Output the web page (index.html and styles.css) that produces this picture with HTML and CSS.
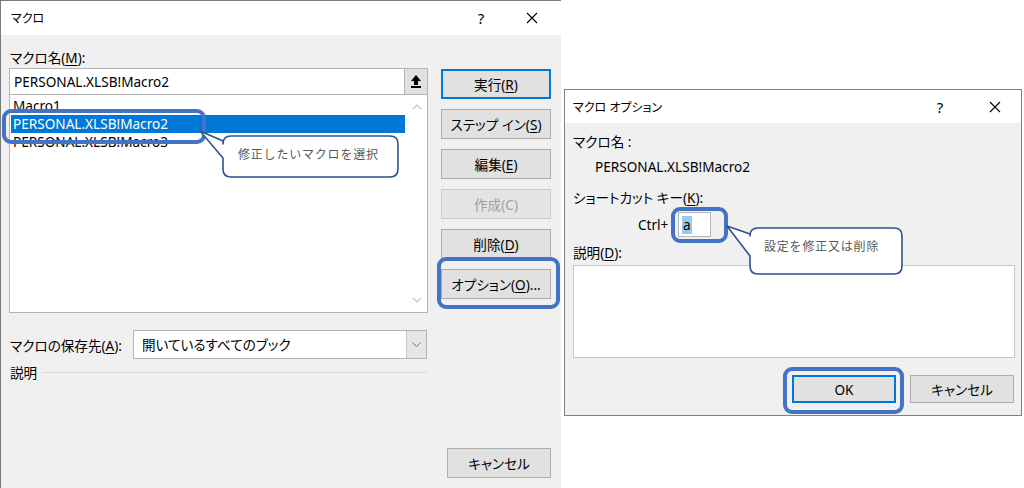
FILE: index.html
```html
<!DOCTYPE html>
<html lang="ja">
<head>
<meta charset="utf-8">
<title>マクロ</title>
<link rel="stylesheet" href="styles.css">
</head>
<body>
<div class="page">
  <section class="dlg dlg-macro">
    <header class="titlebar">
      <span class="title">マクロ</span>
      <span class="tb-btn help">?</span>
      <span class="tb-btn close"><svg width="12" height="12" viewBox="0 0 12 12"><path d="M1 1L11 11M11 1L1 11" stroke="#000" stroke-width="1.1" fill="none"/></svg></span>
    </header>
    <div class="macro-body">
      <div class="macro-main">
        <div class="macro-left">
          <div class="label">マクロ名(<u>M</u>):</div>
          <div class="namebox">
            <span class="val">PERSONAL.XLSB!Macro2</span>
            <span class="collapse-btn"><svg width="12" height="15" viewBox="0 0 12 15"><path d="M6 1L11 7H8V11H4V7H1Z" fill="#000"/><rect x="1" y="12" width="10" height="2" fill="#000"/></svg></span>
          </div>
          <div class="listbox">
            <ul class="items">
              <li>Macro1</li>
              <li class="sel">PERSONAL.XLSB!Macro2</li>
              <li>PERSONAL.XLSB!Macro3</li>
            </ul>
            <div class="vscroll">
              <svg width="10" height="6" viewBox="0 0 10 6"><path d="M1 5L5 1L9 5" stroke="#c2c2c2" stroke-width="1.2" fill="none"/></svg>
              <svg width="10" height="6" viewBox="0 0 10 6"><path d="M1 1L5 5L9 1" stroke="#c2c2c2" stroke-width="1.2" fill="none"/></svg>
            </div>
          </div>
          <div class="store-row">
            <span class="store-label">マクロの保存先(<u>A</u>):</span>
            <div class="combo">
              <span class="combo-val">開いているすべてのブック</span>
              <span class="combo-btn"><svg width="9" height="5" viewBox="0 0 9 5"><path d="M0.5 0.5L4.5 4.5L8.5 0.5" stroke="#6d6d6d" stroke-width="1" fill="none"/></svg></span>
            </div>
          </div>
          <div class="desc-row"><span>説明</span><span class="rule"></span></div>
        </div>
        <div class="macro-buttons">
          <div class="btn default">実行(<u>R</u>)</div>
          <div class="btn">ステップ イン(<u>S</u>)</div>
          <div class="btn">編集(<u>E</u>)</div>
          <div class="btn disabled">作成(C)</div>
          <div class="btn">削除(<u>D</u>)</div>
          <div class="btn">オプション(<u>O</u>)...</div>
        </div>
      </div>
      <div class="footer">
        <div class="btn cancel">キャンセル</div>
      </div>
    </div>

    <div class="hl hl-item"></div>
    <div class="hl hl-opt"></div>
    <div class="callout callout-1">
      <svg width="206" height="56" viewBox="196 126 206 56"><path d="M231 136H390Q398 136 398 144V169Q398 177 390 177H231Q223 177 223 169V158L200 131L223 141V144Q223 136 231 136Z" fill="#fff" stroke="#2f528f" stroke-width="1.6" stroke-linejoin="round"/></svg>
      <span class="callout-text">修正したいマクロを選択</span>
    </div>
  </section>

  <section class="dlg dlg-opt">
    <header class="titlebar">
      <span class="title">マクロ オプション</span>
      <span class="tb-btn help">?</span>
      <span class="tb-btn close"><svg width="12" height="12" viewBox="0 0 12 12"><path d="M1 1L11 11M11 1L1 11" stroke="#000" stroke-width="1.1" fill="none"/></svg></span>
    </header>
    <div class="opt-body">
      <div class="opt-label first">マクロ名&nbsp;:</div>
      <div class="opt-name">PERSONAL.XLSB!Macro2</div>
      <div class="opt-label sc">ショートカット キー(<u>K</u>):</div>
      <div class="ctrl-row">
        <span class="ctrl">Ctrl+</span>
        <span class="keybox"><span class="keysel">a</span></span>
      </div>
      <div class="opt-label dsc">説明(<u>D</u>):</div>
      <div class="textarea"></div>
      <div class="opt-buttons">
        <div class="btn default ok">OK</div>
        <div class="btn">キャンセル</div>
      </div>
    </div>

    <div class="hl hl-key"></div>
    <div class="hl hl-ok"></div>
    <div class="callout callout-2">
      <svg width="183" height="56" viewBox="723 222 183 56"><path d="M758 228H894Q902 228 902 236V266Q902 274 894 274H758Q750 274 750 266V256L727 226L750 234V236Q750 228 758 228Z" fill="#fff" stroke="#2f528f" stroke-width="1.6" stroke-linejoin="round"/></svg>
      <span class="callout-text">設定を修正又は削除</span>
    </div>
  </section>
</div>
</body>
</html>
```

FILE: styles.css
```css
* { box-sizing: border-box; margin: 0; padding: 0; }
html, body { width: 1024px; height: 488px; overflow: hidden; background: #fff; }
body {
  font-family: "Noto Sans", "Noto Sans CJK JP", sans-serif;
  font-size: 13.6px;
  color: #000;
  font-feature-settings: "palt" 1;
}
u { text-decoration: underline; text-underline-offset: 2px; text-decoration-thickness: 1px; }

.page { display: flex; align-items: flex-start; height: 488px; }

.dlg { position: relative; background: #f0f0f0; }

/* title bars */
.titlebar { background: #fff; display: flex; align-items: center; }
.title { flex: 1; font-size: 12px; }
.tb-btn { width: 46px; height: 100%; display: flex; align-items: center; justify-content: center; font-size: 15px; }

/* ---------- Macro dialog ---------- */
.dlg-macro {
  width: 561px;
  height: 488px;
  border-top: 1px solid #7a7a7a;
  border-left: 1px solid #7a7a7a;
}
.dlg-macro .titlebar { height: 34px; padding-left: 10px; padding-right: 6px; }
.dlg-macro .close { margin-left: 5px; }

.macro-body { padding: 14px 10px 0 8px; }
.macro-main { display: flex; gap: 13px; align-items: flex-start; }
.macro-left { width: 419px; display: flex; flex-direction: column; }

.label { height: 19px; line-height: 17px; padding-left: 1px; }

.namebox {
  height: 27px;
  background: #fff;
  border: 1px solid #b4b4b4;
  display: flex;
  align-items: stretch;
}
.namebox .val { flex: 1; line-height: 25px; padding-left: 4px; }
.collapse-btn {
  width: 23px;
  background: #e1e1e1;
  border-left: 1px solid #b4b4b4;
  display: flex;
  align-items: center;
  justify-content: center;
}

.listbox {
  margin-top: -1px;
  height: 219px;
  background: #fff;
  border: 1px solid #b4b4b4;
  display: flex;
}
.items { flex: 1; list-style: none; padding: 2px 1px 0 1px; }
.items li { height: 18px; line-height: 17px; padding-left: 2px; white-space: nowrap; }
.items li.sel { background: #0078d7; color: #fff; }
.vscroll {
  width: 21px;
  display: flex;
  flex-direction: column;
  justify-content: space-between;
  align-items: center;
  padding: 9px 0 9px;
}

.store-row { margin-top: 17px; height: 29px; display: flex; align-items: center; }
.store-label { width: 124px; padding-left: 1px; }
.combo {
  flex: 1;
  height: 29px;
  margin-right: 1px;
  background: #fff;
  border: 1px solid #b4b4b4;
  display: flex;
}
.combo-val { flex: 1; line-height: 27px; padding-left: 8px; }
.combo-btn {
  width: 20px;
  background: #e6e6e6;
  border-left: 1px solid #c8c8c8;
  display: flex;
  align-items: center;
  justify-content: center;
}

.desc-row { margin-top: 4px; height: 18px; display: flex; align-items: center; padding-left: 1px; }
.desc-row .rule { flex: 1; height: 1px; background: #dcdcdc; margin-left: 5px; margin-right: 1px; }

.macro-buttons { width: 110px; padding-top: 20px; display: flex; flex-direction: column; gap: 10px; }

.btn {
  height: 30px;
  background: #e1e1e1;
  border: 1px solid #adadad;
  display: flex;
  align-items: center;
  justify-content: center;
  white-space: nowrap;
}
.btn.default { border-color: #0078d7; box-shadow: inset 0 0 0 1px #0078d7; }
.btn.disabled { color: #a0a0a0; border-color: #cccccc; background: #e4e4e4; }

.footer { margin-top: 67px; display: flex; justify-content: flex-end; }
.footer .cancel { width: 104px; }

/* ---------- Option dialog ---------- */
.dlg-opt {
  margin-left: 3px;
  margin-top: 89px;
  width: 458px;
  height: 327px;
  border: 1px solid #808080;
}
.dlg-opt .titlebar { height: 33px; padding-left: 8px; padding-right: 3px; }
.dlg-opt .close { margin-left: 9px; }

.opt-body { padding: 0 6px 0 8px; display: flex; flex-direction: column; }
.opt-label { height: 16px; line-height: 16px; }
.opt-label.first { margin-top: 11px; }
.opt-name { margin-top: 9px; height: 16px; line-height: 16px; padding-left: 22px; }
.opt-label.sc { margin-top: 15px; }
.ctrl-row { margin-top: 6px; height: 25px; display: flex; align-items: center; padding-left: 65px; }
.ctrl { width: 40px; }
.keybox {
  width: 33px;
  height: 25px;
  background: #fff;
  border: 1px solid #b4b4b4;
  display: flex;
  align-items: center;
  padding-left: 3px;
}
.keysel { background: #99c9ef; line-height: 18px; padding: 0 1px; }
.opt-label.dsc { margin-top: 8px; }
.textarea { margin-top: 4px; height: 93px; background: #fff; border: 1px solid #c8c8c8; }
.opt-buttons { margin-top: 17px; display: flex; justify-content: flex-end; gap: 14px; padding-right: 1px; }
.opt-buttons .btn { width: 104px; height: 28px; }

/* ---------- annotations ---------- */
.hl { position: absolute; border: 4px solid #4472c4; border-radius: 9px; }
.hl-item { left: 1px; top: 108px; width: 204px; height: 35px; }
.hl-opt { left: 436px; top: 256px; width: 123px; height: 52px; }
.hl-key { left: 106px; top: 117px; width: 57px; height: 36px; }
.hl-ok { left: 218px; top: 277px; width: 121px; height: 47px; }

.callout { position: absolute; }
.callout svg { position: absolute; left: 0; top: 0; }
.callout-text {
  position: absolute;
  font-size: 12px;
  line-height: 16px;
  letter-spacing: 0.8px;
  color: #595959;
  white-space: nowrap;
  font-feature-settings: normal;
}
.callout-1 { left: 195px; top: 125px; width: 206px; height: 56px; }
.callout-1 .callout-text { left: 42px; top: 21px; }
.callout-2 { left: 158px; top: 132px; width: 183px; height: 56px; }
.callout-2 .callout-text { left: 41px; top: 17px; }
```
